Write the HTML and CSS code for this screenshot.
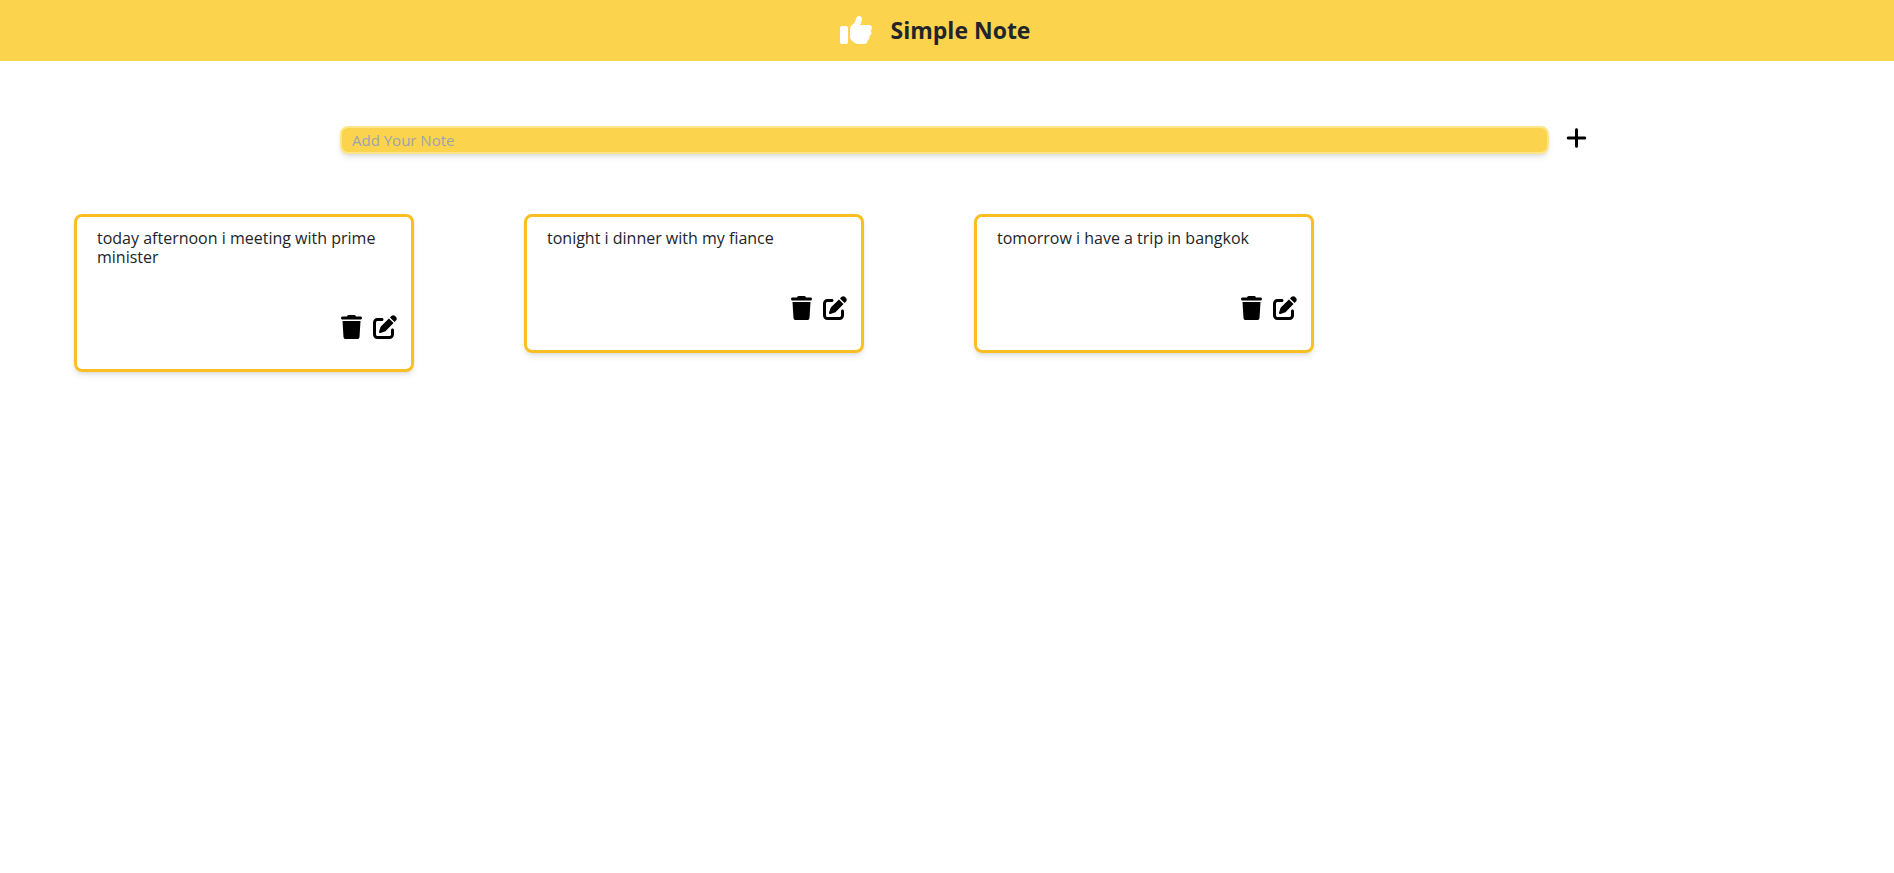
FILE: index.html
```
<!DOCTYPE html>
<html lang="en">
<head>
<meta charset="utf-8">
<meta name="viewport" content="width=device-width, initial-scale=1">
<title>Simple Note</title>
<link rel="stylesheet" href="styles.css">
</head>
<body>
<svg class="sprite" aria-hidden="true">
  <symbol id="trash" viewBox="0 0 448 512"><path d="M135.2 17.7L128 32H32C14.3 32 0 46.3 0 64S14.3 96 32 96H416c17.7 0 32-14.3 32-32s-14.3-32-32-32H320l-7.2-14.3C307.4 6.8 296.3 0 284.2 0H163.8c-12.1 0-23.2 6.8-28.6 17.7zM416 128H32L53.2 467c1.6 25.3 22.6 45 47.9 45H346.9c25.3 0 46.3-19.7 47.9-45L416 128z"/></symbol>
  <symbol id="edit" viewBox="0 0 512 512"><path d="M471.6 21.7c-21.9-21.9-57.3-21.9-79.2 0L362.3 51.7l97.9 97.9 30.1-30.1c21.9-21.9 21.9-57.3 0-79.2L471.6 21.7zm-299.2 220c-6.1 6.1-10.8 13.6-13.5 21.9l-29.6 88.8c-2.9 8.6-.6 18.1 5.8 24.6s15.9 8.7 24.6 5.8l88.8-29.6c8.2-2.7 15.7-7.4 21.9-13.5L437.7 172.3 339.7 74.3 172.4 241.7zM96 64C43 64 0 107 0 160V416c0 53 43 96 96 96H352c53 0 96-43 96-96V320c0-17.7-14.3-32-32-32s-32 14.3-32 32v96c0 17.7-14.3 32-32 32H96c-17.7 0-32-14.3-32-32V160c0-17.7 14.3-32 32-32h96c17.7 0 32-14.3 32-32s-14.3-32-32-32H96z"/></symbol>
</svg>
<header class="header">
  <svg class="logo" viewBox="0 0 512 512" aria-hidden="true"><path d="M313.4 32.9c26 5.2 42.9 30.5 37.7 56.5l-2.3 11.4c-5.3 26.7-15.1 52.1-28.8 75.2H464c26.5 0 48 21.5 48 48c0 18.5-10.5 34.6-25.9 42.6C497 275.4 504 288.9 504 304c0 23.4-16.8 42.9-38.9 47.1c4.4 7.3 6.9 15.8 6.9 24.9c0 21.3-13.9 39.4-33.1 45.6c.7 3.3 1.1 6.8 1.1 10.4c0 26.5-21.5 48-48 48H294.5c-19 0-37.5-5.6-53.3-16.1l-38.5-25.7C176 420.4 160 390.4 160 358.3V320 272 247.1c0-29.2 13.3-56.7 36-75l7.4-5.9c26.5-21.2 44.6-51 51.2-84.2l2.3-11.4c5.2-26 30.5-42.9 56.5-37.7zM32 192H96c17.7 0 32 14.3 32 32V448c0 17.7-14.3 32-32 32H32c-17.7 0-32-14.3-32-32V224c0-17.7 14.3-32 32-32z"/></svg>
  <h1 class="title">Simple Note</h1>
</header>
<main>
  <form class="add-form">
    <input class="note-input" type="text" placeholder="Add Your Note" aria-label="Add Your Note">
    <button class="icon-button" type="button" aria-label="Add note">
      <svg class="icon icon-narrow" viewBox="0 0 448 512"><path d="M256 80c0-17.7-14.3-32-32-32s-32 14.3-32 32V224H48c-17.7 0-32 14.3-32 32s14.3 32 32 32H192V432c0 17.7 14.3 32 32 32s32-14.3 32-32V288H400c17.7 0 32-14.3 32-32s-14.3-32-32-32H256V80z"/></svg>
    </button>
  </form>
  <section class="notes" aria-label="Notes">
    <article class="note">
      <p class="note-text">today afternoon i meeting with prime minister</p>
      <div class="note-actions">
        <button class="icon-button" type="button" aria-label="Delete note"><svg class="icon icon-narrow"><use href="#trash"/></svg></button>
        <button class="icon-button" type="button" aria-label="Edit note"><svg class="icon"><use href="#edit"/></svg></button>
      </div>
    </article>
    <article class="note">
      <p class="note-text">tonight i dinner with my fiance</p>
      <div class="note-actions">
        <button class="icon-button" type="button" aria-label="Delete note"><svg class="icon icon-narrow"><use href="#trash"/></svg></button>
        <button class="icon-button" type="button" aria-label="Edit note"><svg class="icon"><use href="#edit"/></svg></button>
      </div>
    </article>
    <article class="note">
      <p class="note-text">tomorrow i have a trip in bangkok</p>
      <div class="note-actions">
        <button class="icon-button" type="button" aria-label="Delete note"><svg class="icon icon-narrow"><use href="#trash"/></svg></button>
        <button class="icon-button" type="button" aria-label="Edit note"><svg class="icon"><use href="#edit"/></svg></button>
      </div>
    </article>
  </section>
</main>
</body>
</html>
```
FILE: styles.css
```
* { box-sizing: border-box; }
body {
  margin: 0;
  background: #fff;
  color: #212529;
  font-family: "Segoe UI", "Open Sans", "Noto Sans", sans-serif;
  font-size: 16px;
}
.sprite { display: none; }
.header {
  display: flex;
  align-items: center;
  justify-content: center;
  gap: 19px;
  padding: 12px 48px 13px 24px;
  background: #fcd34d;
}
.logo {
  width: 32px;
  height: 32px;
  fill: #fff;
}
.title {
  margin: 0;
  font-size: 23px;
  font-weight: 700;
  line-height: 36px;
}
.add-form {
  display: flex;
  align-items: flex-start;
  gap: 17px;
  padding: 65px 307px 0 340px;
}
.note-input {
  flex: 1;
  min-width: 0;
  height: 28px;
  padding: 0 10px;
  border: 2px solid #fde68a;
  border-radius: 8px;
  background: #fcd34d;
  box-shadow: 0 4px 6px -1px rgb(0 0 0 / 10%), 0 2px 4px -2px rgb(0 0 0 / 10%);
  color: inherit;
  font-family: inherit;
  font-size: 15px;
}
.note-input::placeholder {
  color: #9ca3af;
  opacity: 1;
}
.icon-button {
  display: block;
  padding: 0;
  border: 0;
  background: none;
  color: #000;
  cursor: pointer;
}
.icon {
  display: block;
  width: 24px;
  height: 24px;
  fill: currentColor;
}
.icon-narrow { width: 21px; }
.notes {
  display: grid;
  grid-template-columns: repeat(auto-fill, minmax(300px, 1fr));
  align-items: start;
  gap: 110px;
  padding: 60px 130px 60px 74px;
}
.note {
  padding: 12px 14px 30px 20px;
  border: 3px solid #fbbf24;
  border-radius: 8px;
  box-shadow: 0 4px 6px -1px rgb(0 0 0 / 10%), 0 2px 4px -2px rgb(0 0 0 / 10%);
}
.note-text {
  margin: 0;
  line-height: 19px;
}
.note-actions {
  display: flex;
  justify-content: flex-end;
  gap: 11px;
  margin-top: 48px;
}
```
